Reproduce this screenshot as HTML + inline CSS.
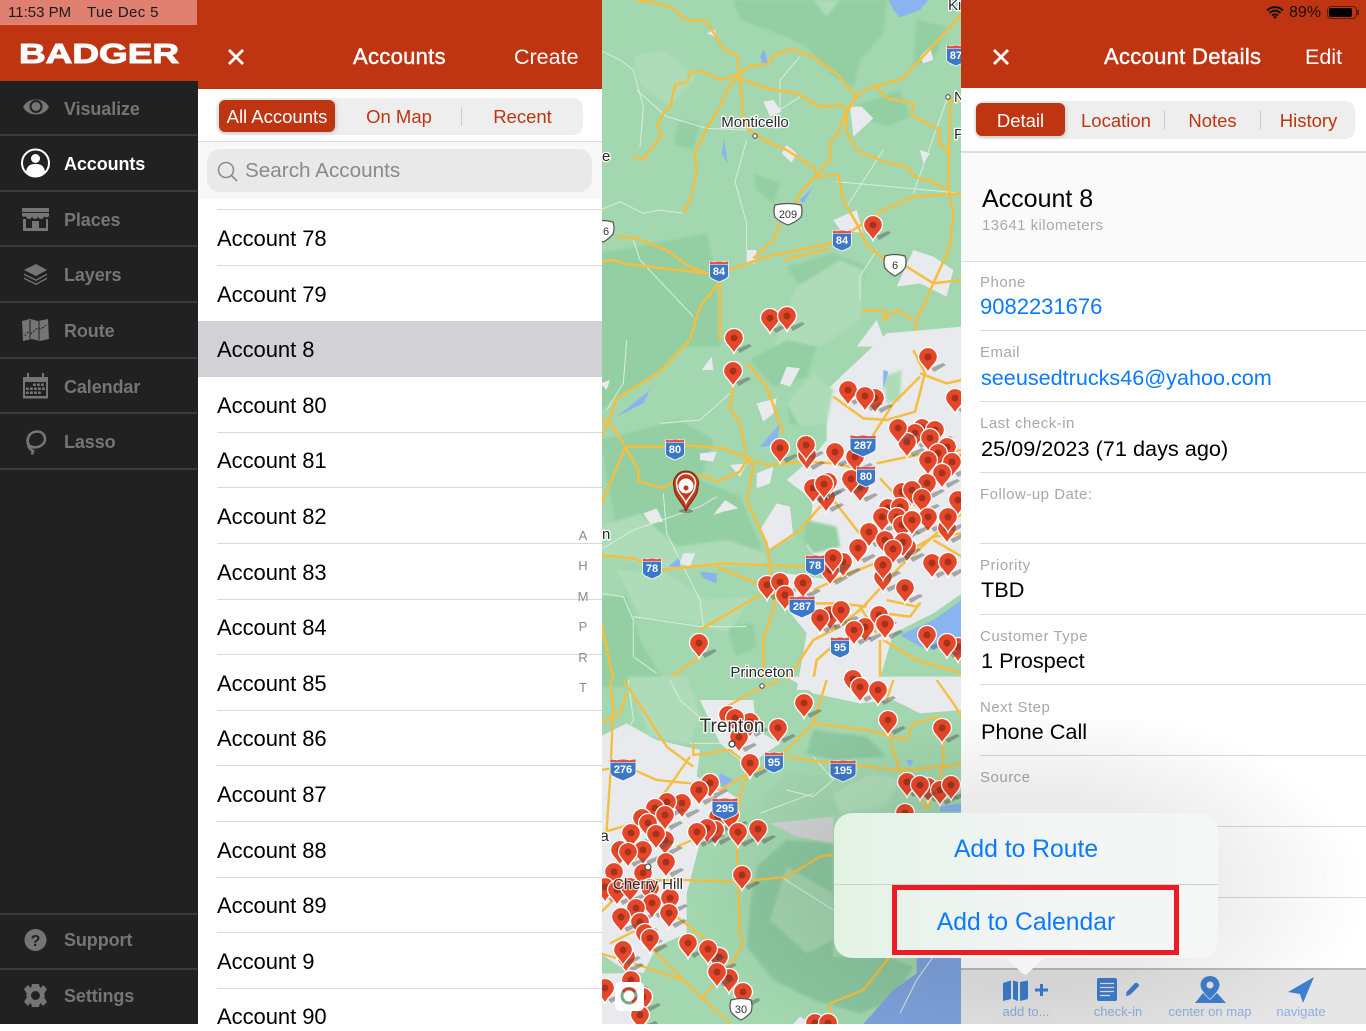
<!DOCTYPE html>
<html><head><meta charset="utf-8"><title>Badger</title>
<style>
html,body{margin:0;padding:0;width:1366px;height:1024px;overflow:hidden;background:#fff;font-family:"Liberation Sans",sans-serif}
.t{position:absolute;white-space:nowrap;line-height:28px;height:28px}
.a{position:absolute}
.h{color:#fff;font-size:21.5px}
.tm{-webkit-text-stroke:.45px #fff;font-size:22px;letter-spacing:.3px}
.nav{color:#757575;font-size:18px;font-weight:700;left:64px;letter-spacing:-.1px}
.l{position:absolute;height:1px;background:#d8d8d8}
.seg{color:#bf3411;font-size:18.5px;text-align:center}
.row{left:217px;font-size:22px;color:#000;letter-spacing:-.05px}
.idx{left:573px;width:20px;text-align:center;font-size:13px;color:#8a8a8a}
.lab{left:980px;font-size:15px;color:#a8a8a8;letter-spacing:.5px}
.val{left:981px;font-size:21.7px;color:#000}
.bl{color:#0a7aff}
.tb{font-size:13px;color:#8ab0df;text-align:center;top:998px}
.pv{font-size:24.7px;color:#0a7aff;text-align:center;left:834px;width:384px}
.mt{font-family:"Liberation Sans",sans-serif;fill:#2a2a2a;stroke:#fff;stroke-width:2.5px;paint-order:stroke}
.sh{font-family:"Liberation Sans",sans-serif;font-size:11px;font-weight:700;text-anchor:middle}
</style></head><body>

<!-- map -->
<svg class="a" style="left:602px;top:0" width="359" height="1024" viewBox="602 0 359 1024">
<defs>
<filter id="b" x="-20%" y="-20%" width="140%" height="140%"><feGaussianBlur stdDeviation="4"/></filter>
<g id="p"><path d="M3 11 L15 6 L18 8 L6 15Z" fill="#555" opacity=".45"/><path d="M0 15.500 C-2 10 -9.500 6 -9.500 0 A9.500 9.500 0 1 1 9.500 0 C9.500 6 2 10 0 15.500Z" fill="#e5472a" stroke="#fff" stroke-width="1.300"/><circle r="3.500" fill="#a5321d"/></g>
<g id="i"><path d="M-9.500 -7 V4 C-9.500 8 -4 9 0 11 C4 9 9.500 8 9.500 4 V-7Z" fill="#3c78c8" stroke="#fff" stroke-width=".8"/><path d="M-9.500 -10 L-5 -9 L0 -10 L5 -9 L9.500 -10 V-6.500 H-9.500Z" fill="#d9534f" stroke="#fff" stroke-width=".6"/></g>
<g id="j"><path d="M-13 -7 V3 C-13 8 -5 9 0 12 C5 9 13 8 13 3 V-7Z" fill="#3c78c8" stroke="#fff" stroke-width=".8"/><path d="M-13 -10 L-6 -9 L0 -10 L6 -9 L13 -10 V-6.500 H-13Z" fill="#d9534f" stroke="#fff" stroke-width=".6"/></g>
<g id="s"><path d="M-10 -9 Q0 -12 10 -9 Q12 -3 10 3 Q6 8 0 11 Q-6 8 -10 3 Q-12 -3 -10 -9Z" fill="#fff" stroke="#555" stroke-width="1.200"/></g>
<g id="w"><path d="M-13 -9 Q0 -12 13 -9 Q15 -3 13 3 Q8 8 0 11 Q-8 8 -13 3 Q-15 -3 -13 -9Z" fill="#fff" stroke="#555" stroke-width="1.200"/></g>
</defs>
<rect x="602" y="0" width="359" height="1024" fill="#a2d7af"/>

<!-- zoom4 area -->
<g transform="translate(600,0) scale(.33333)">
<g fill="#93cfa3" filter="url(#b)">
<path d="M400 0 H860 L850 100 L780 180 L760 260 L700 230 L620 140 L560 110 L420 60Z"/>
<path d="M760 320 L900 270 L930 350 L860 380 L780 350Z"/>
<path d="M0 760 L320 700 L350 830 L360 1040 H0Z"/>
<path d="M460 520 L540 550 L520 610 L470 570Z"/>
<path d="M560 800 L700 760 L800 800 L780 900 L600 860Z"/>
<path d="M950 60 L1040 80 L1000 180 L940 200Z"/>
<path d="M240 360 L300 370 L280 450 L220 430Z"/>
</g>
<g fill="#aedcb9" filter="url(#b)">
<path d="M100 170 L190 150 L290 230 L210 320 L120 250Z"/>
<path d="M590 860 L720 780 L790 810 L780 960 L660 1040 L520 1040Z"/>
<path d="M640 0 L720 0 L680 50Z"/>
</g>
<g fill="#e8eaed">
<path d="M490 305 L520 300 L545 335 L510 350Z"/>
<path d="M750 320 L785 320 L820 355 L760 410Z"/>
<path d="M545 460 L560 435 L590 460 L575 488Z"/>
<path d="M700 660 L770 630 L790 700 L720 690Z"/>
<path d="M940 750 L1000 770 L1060 810 L1040 890 L960 850 L890 860Z"/>
<path d="M320 100 L345 88 L350 112Z"/>
<path d="M960 450 L990 460 L970 490Z"/>
<path d="M440 750 L470 750 L465 790 L440 790Z"/>
<path d="M960 170 L990 140 L1000 180 L970 190Z"/>
<path d="M770 1040 L830 960 L860 1040Z"/>
</g>
<g fill="#8ab4f0">
<path d="M865 0 L985 0 L960 30 L900 52 L880 30Z"/>
<path d="M480 170 L492 148 L505 190 L490 195Z"/>
<path d="M372 415 L383 490 L365 460Z"/>
<path d="M640 170 L720 225 L680 205Z"/>
<path d="M600 600 L640 560 L610 610Z"/>
</g>
<g fill="none" stroke="#d8eedd" stroke-width="3">
<path d="M0 150 L60 180 L100 210 L130 320 L120 440"/>
<path d="M110 270 L200 350 L320 385 L440 390"/>
<path d="M440 420 L405 545 L440 670 L440 750"/>
<path d="M0 630 L60 605 L130 640 L180 630 L250 640"/>
<path d="M710 545 L1086 580"/>
<path d="M850 450 L740 620"/>
<path d="M1040 300 L940 580"/>
<path d="M600 290 L540 330 L540 240 L600 170"/>
<path d="M100 720 L120 780 L280 950"/>
<path d="M830 750 L780 830 L780 900"/>
</g>
<g fill="none" stroke="#f6bd3f" stroke-width="7.500" stroke-linejoin="round">
<path d="M110 0 L170 10 L220 25 L240 45 L270 62 L318 62 L345 105 L372 148 L410 165 L418 225 L430 345 L440 385 L500 425 L560 450 L645 505 L650 530 L715 525 L730 600 L775 680 L800 735 L850 775 L920 800 L1000 850"/>
<path d="M100 470 L130 478 L185 405 L172 375 L190 340 L212 318 L225 255 L262 245 L272 215 L310 215 L362 240 L415 225 L445 200 L510 190 L520 165 L575 148 L640 170 L720 230 L735 255 L760 275 L765 300 L740 330 L715 395 L690 430 L690 480 L645 530 L600 580 L585 615"/>
<path d="M418 225 L380 270 L360 320 L320 385 L285 460 L290 520 L270 600 L250 640"/>
<path d="M418 235 L500 265 L590 280 L660 322 L720 315 L745 330 L770 290 L800 265 L905 238 L950 190 L1060 70 L1086 40"/>
<path d="M830 262 L860 295 L940 310 L935 345 L1020 390"/>
<path d="M740 340 L740 395 L770 450 L850 485 L920 500 L945 530 L1000 545 L1040 570"/>
<path d="M0 785 L40 780 L80 792 L320 820 L360 820 L500 770 L690 730 L760 690 L850 630 L940 590 L1086 580"/>
<path d="M50 710 L100 712 L200 750 L260 795 L320 820"/>
<path d="M540 670 L520 720 L460 775"/>
<path d="M360 840 L360 1020"/>
<path d="M355 850 L300 920 L270 1020"/>
<path d="M1086 300 L1050 300 L1045 560 L1060 640 L1050 740 L1000 850 L950 960 L945 1020"/>
<path d="M1020 390 L1015 420 L1045 460"/>
<path d="M1000 850 L1086 840"/>
<path d="M785 930 L860 935 L850 960 L890 930 L940 960"/>
<path d="M550 780 L690 745"/>
</g>
</g>

<!-- zoom5 area -->
<g transform="translate(600,340) scale(.33333)">
<path d="M680 150 L860 -20 L1086 -40 V760 L1000 820 L880 880 L830 1050 H590 L620 880 L540 780 L560 700 L700 720 L620 620 L640 480 L560 420 L640 350 L680 300Z" fill="#e8eaed"/>
<g fill="#93cfa3" filter="url(#b)">
<path d="M0 -10 L270 -10 L180 95 L50 175 L0 210Z"/>
<path d="M0 300 L240 240 L340 300 L300 420 L420 470 L470 590 L500 670 L190 680 L60 620Z"/>
<path d="M620 540 L710 560 L720 620 L640 640 L610 600Z"/>
<path d="M450 60 L560 0 L650 20 L620 110 L520 140Z"/>
<path d="M560 180 L640 220 L620 260 L570 250Z"/>
<path d="M380 860 L460 850 L470 920 L410 950Z"/>
<path d="M0 770 L80 770 L120 900 L200 1040 H0Z"/>
</g>
<g fill="#aedcb9" filter="url(#b)">
<path d="M0 560 L120 520 L230 620 L380 600 L500 640 L500 670 L190 690 L0 640Z"/>
<path d="M50 690 L200 700 L320 780 L460 770 L380 880 L290 850 L120 830Z"/>
<path d="M850 110 L905 90 L900 180 L860 190Z" />
<path d="M640 100 L700 150 L680 250 L600 260 L560 190Z"/>
</g>
<g fill="#e8eaed">
<path d="M470 190 L530 175 L520 220 L490 245Z"/>
<path d="M560 80 L600 85 L570 140 L540 130Z"/>
<path d="M300 340 L350 335 L340 365 L300 360Z"/>
<path d="M340 525 L375 480 L415 505 L370 515Z"/>
<path d="M130 520 L170 505 L190 545 L150 550Z"/>
<path d="M305 90 L335 50 L340 90Z"/>
<path d="M470 400 L520 380 L510 430 L470 445Z"/>
<path d="M480 570 L530 490 L570 500 L580 590 L510 630Z"/>
<path d="M250 640 L285 640 L270 680 L240 670Z"/>
<path d="M390 375 L440 370 L420 410Z"/>
<path d="M0 130 L30 120 L20 150Z"/>
</g>
<g fill="#8ab4f0">
<path d="M1086 780 L1000 840 L900 885 L960 920 L1000 930 L1086 900Z"/>
<path d="M480 320 L540 250 L530 310 L500 320Z"/>
<path d="M300 695 L350 700 L350 730 L310 715Z"/>
<path d="M205 680 L240 650 L240 680Z"/>
<path d="M50 230 L150 150 L130 190Z"/>
<path d="M850 90 L865 95 L850 150Z"/>
</g>
<g fill="none" stroke="#d8eedd" stroke-width="3">
<path d="M0 630 L100 570 L300 500 L350 470"/>
<path d="M190 460 L200 580 L300 780 L310 860"/>
<path d="M100 830 L300 860 L440 860"/>
<path d="M80 0 L70 130 L20 210"/>
<path d="M180 250 L300 240 L390 160"/>
<path d="M0 760 L70 770 L100 840 L100 950 L170 1000"/>
</g>
<g fill="none" stroke="#f6bd3f" stroke-width="7.500" stroke-linejoin="round">
<path d="M270 0 L180 95 L50 175 L30 230 L0 300"/>
<path d="M5 235 L40 260 L75 320 L115 390 L115 425 L190 445 L250 405 L320 410 L350 425 L420 395 L440 360"/>
<path d="M75 320 L190 320 L250 315 L370 325 L440 355 L500 375 L620 365 L700 370 L770 385"/>
<path d="M75 325 L30 430 L0 500"/>
<path d="M400 140 L390 205 L420 250 L440 355 L460 380 L440 480 L500 610 L510 680 L525 790 L490 900 L490 1020"/>
<path d="M440 70 L500 140 L550 280"/>
<path d="M510 630 L600 570 L660 500 L700 480 L770 570 L800 600"/>
<path d="M0 645 L100 655 L180 690 L370 670 L610 680 L700 680"/>
<path d="M350 680 L470 730"/>
<path d="M300 870 L470 770 L520 750"/>
<path d="M300 950 L200 1020"/>
<path d="M640 750 L750 700 L850 660 L950 620 L1000 590 L1086 580"/>
<path d="M600 790 L720 790 L800 800"/>
<path d="M560 1020 L640 900 L720 860 L790 800 L900 680 L1010 580 L1086 520"/>
<path d="M700 170 L790 235 L860 240 L945 215 L975 100 L940 30"/>
<path d="M810 300 L880 190 L960 110"/>
<path d="M830 370 L950 345 L1086 330"/>
<path d="M840 415 L900 480 L960 500"/>
<path d="M840 900 L840 1020"/>
<path d="M850 900 L950 960 L1086 1000"/>
<path d="M780 800 L830 880"/>
<path d="M860 780 L950 800 L960 790 L930 830 L850 820"/>
<path d="M0 830 L40 1020"/>
<path d="M640 1020 L650 960 L720 900"/>
<path d="M960 100 L1040 130 L1086 120"/>
<path d="M1000 600 L1086 650"/>
</g>
</g>

<!-- zoom6 area -->
<g transform="translate(600,680) scale(.33333)">
<g fill="#e8eaed">
<path d="M0 170 L80 130 L170 180 L300 210 L290 290 L360 320 L420 360 L310 450 L260 640 L260 760 L170 800 L130 880 L60 860 L0 820Z"/>
<path d="M300 60 L460 60 L470 150 L540 190 L440 260 L360 190Z"/>
<path d="M560 -10 H1086 V90 L960 100 L880 60 L780 70 L640 40Z"/>
<path d="M510 430 L700 410 L700 490 L590 470Z" fill="#cfd1d3"/>
<path d="M0 880 L100 880 L140 1032 H0Z"/>
<path d="M600 1010 L640 1032 H580Z"/>
</g>
<g fill="#8bc7a0" filter="url(#b)">
<path d="M470 560 L560 480 L700 490 L700 830 L860 830 L940 860 L880 960 L780 1000 L640 960 L520 900 L440 800 L450 680Z"/>
<path d="M640 150 L800 170 L860 230 L700 240 L620 220Z"/>
</g>
<g fill="#a2d3ae" filter="url(#b)">
<path d="M560 560 L700 640 L700 780 L620 820 L510 720Z"/>
<path d="M560 280 L680 290 L720 400 L510 420 L490 350Z"/>
</g>
<g fill="#aedcb9" filter="url(#b)">
<path d="M80 -10 L260 -10 L300 100 L270 190 L150 170Z"/>
<path d="M820 280 L900 300 L860 380 L720 400 L700 340Z"/>
</g>
<path d="M790 1032 L880 930 L950 880 L950 830 H1086 V1032Z" fill="#7fa3dd"/>
<path d="M360 280 L400 300 L370 320 L355 300Z" fill="#8ab4f0"/>
<path d="M920 240 L940 240 L930 260Z" fill="#8ab4f0"/>
<path d="M1020 380 L1086 370 L1086 395 L1020 395Z" fill="#8ab4f0"/>
<g fill="none" stroke="#d8eedd" stroke-width="3">
<path d="M560 330 L640 350 L700 300 L640 230"/>
<path d="M480 400 L640 340"/>
<path d="M550 595 L700 690"/>
<path d="M270 190 L400 190"/>
<path d="M85 0 L100 120 L60 180"/>
<path d="M210 0 L240 60 L320 130"/>
<path d="M1000 830 L950 900 L900 1000"/>
</g>
<g fill="none" stroke="#f6bd3f" stroke-width="7" stroke-linejoin="round">
<path d="M30 0 L40 80 L30 300 L20 450"/>
<path d="M70 0 L130 90 L200 200 L280 260"/>
<path d="M0 270 L80 260 L170 300 L270 310 L360 330 L430 290 L520 250 L640 130 L680 0"/>
<path d="M270 230 L200 330 L100 430 L0 460"/>
<path d="M280 190 L280 225 L390 210 L450 260 L420 340 L410 500 L420 770 L430 790 L390 860 L300 960"/>
<path d="M560 230 L700 250 L900 270 L1030 260 L1086 250"/>
<path d="M640 130 L800 150 L920 180 L940 130 L1020 110"/>
<path d="M860 150 L900 270 L980 380"/>
<path d="M1030 180 L1030 260 L980 390"/>
<path d="M230 500 L300 470 L400 410"/>
<path d="M0 600 L250 600 L420 605 L560 590 L660 530 L700 525"/>
<path d="M150 800 L250 900 L390 1030"/>
<path d="M230 710 L320 780"/>
<path d="M0 820 L100 850 L250 900"/>
<path d="M690 1020 L690 970 L790 930 L870 830"/>
<path d="M130 740 L30 790"/>
<path d="M0 700 L60 640"/>
<path d="M380 80 L470 30 L540 0"/>
<path d="M860 60 L880 0"/>
<path d="M1010 0 L1060 70 L1086 110"/>
<path d="M0 130 L60 100 L80 40"/>
</g>
</g>

<!-- labels -->
<text class="mt" x="755" y="127" font-size="15" text-anchor="middle">Monticello</text>
<text class="mt" x="762" y="677" font-size="15" text-anchor="middle">Princeton</text>
<text class="mt" x="948" y="10" font-size="15">Ki</text>
<text class="mt" x="602" y="161" font-size="15">e</text>
<text class="mt" x="954" y="102" font-size="15">N</text>
<text class="mt" x="954" y="139" font-size="15">P</text>
<text class="mt" x="602" y="539" font-size="15">n</text>
<text class="mt" x="600" y="841" font-size="16">a</text>
<circle cx="755" cy="136" r="2.200" fill="#fff" stroke="#444"/>
<circle cx="948" cy="97" r="2.200" fill="#fff" stroke="#444"/>
<circle cx="762" cy="686" r="2.200" fill="#fff" stroke="#444"/>

<!-- shields -->
<use href="#i" x="719" y="271"/><text class="sh" x="719" y="275" fill="#fff">84</text>
<use href="#i" x="842" y="240"/><text class="sh" x="842" y="244" fill="#fff">84</text>
<use href="#i" x="675" y="449"/><text class="sh" x="675" y="453" fill="#fff">80</text>
<use href="#i" x="652" y="568"/><text class="sh" x="652" y="572" fill="#fff">78</text>
<use href="#w" x="788" y="214"/><text class="sh" x="788" y="218" fill="#333" style="font-weight:400">209</text>
<use href="#s" x="895" y="265"/><text class="sh" x="895" y="269" fill="#333" style="font-weight:400">6</text>
<use href="#s" x="603" y="231"/><text class="sh" x="606" y="235" fill="#333" style="font-weight:400">6</text>
<use href="#i" x="956" y="55"/><text class="sh" x="956" y="59" fill="#fff">87</text>

<!-- pins -->
<g id="pins">
<use href="#p" x="873" y="225"/><use href="#p" x="770" y="318"/><use href="#p" x="787" y="316"/><use href="#p" x="734" y="338"/><use href="#p" x="733" y="371"/><use href="#p" x="928" y="357"/><use href="#p" x="875" y="398"/><use href="#p" x="848" y="390"/><use href="#p" x="865" y="396"/><use href="#p" x="955" y="398"/>
<use href="#p" x="922" y="428"/><use href="#p" x="935" y="430"/><use href="#p" x="915" y="433"/><use href="#p" x="907" y="442"/><use href="#p" x="898" y="428"/><use href="#p" x="930" y="438"/><use href="#p" x="947" y="447"/><use href="#p" x="938" y="453"/><use href="#p" x="928" y="460"/><use href="#p" x="952" y="462"/><use href="#p" x="942" y="473"/>
<use href="#p" x="780" y="448"/><use href="#p" x="807" y="455"/><use href="#p" x="806" y="445"/><use href="#p" x="835" y="452"/><use href="#p" x="855" y="457"/><use href="#p" x="860" y="487"/><use href="#p" x="851" y="479"/><use href="#p" x="826" y="497"/><use href="#p" x="828" y="482"/><use href="#p" x="813" y="488"/><use href="#p" x="824" y="484"/>
<use href="#p" x="927" y="483"/><use href="#p" x="902" y="492"/><use href="#p" x="912" y="490"/><use href="#p" x="922" y="498"/><use href="#p" x="958" y="500"/><use href="#p" x="888" y="508"/><use href="#p" x="900" y="507"/><use href="#p" x="882" y="517"/><use href="#p" x="897" y="517"/><use href="#p" x="928" y="517"/><use href="#p" x="947" y="528"/><use href="#p" x="948" y="517"/><use href="#p" x="902" y="525"/><use href="#p" x="912" y="520"/>
<use href="#p" x="869" y="532"/><use href="#p" x="858" y="548"/><use href="#p" x="885" y="540"/><use href="#p" x="907" y="547"/><use href="#p" x="903" y="542"/><use href="#p" x="893" y="549"/><use href="#p" x="843" y="562"/><use href="#p" x="830" y="570"/><use href="#p" x="833" y="558"/><use href="#p" x="883" y="577"/><use href="#p" x="883" y="565"/><use href="#p" x="932" y="563"/><use href="#p" x="948" y="562"/><use href="#p" x="905" y="588"/>
<use href="#p" x="767" y="585"/><use href="#p" x="780" y="582"/><use href="#p" x="803" y="583"/><use href="#p" x="785" y="595"/><use href="#p" x="830" y="615"/><use href="#p" x="820" y="618"/><use href="#p" x="841" y="610"/><use href="#p" x="865" y="627"/><use href="#p" x="854" y="630"/><use href="#p" x="879" y="615"/><use href="#p" x="885" y="624"/><use href="#p" x="958" y="647"/><use href="#p" x="927" y="635"/><use href="#p" x="947" y="643"/><use href="#p" x="699" y="643"/>
<use href="#p" x="853" y="679"/><use href="#p" x="860" y="687"/><use href="#p" x="878" y="690"/><use href="#p" x="804" y="703"/><use href="#p" x="888" y="720"/><use href="#p" x="942" y="728"/><use href="#p" x="728" y="715"/><use href="#p" x="750" y="722"/><use href="#p" x="735" y="718"/><use href="#p" x="739" y="737"/><use href="#p" x="778" y="728"/><use href="#p" x="750" y="763"/>
<use href="#p" x="907" y="782"/><use href="#p" x="928" y="787"/><use href="#p" x="940" y="790"/><use href="#p" x="951" y="785"/><use href="#p" x="920" y="785"/><use href="#p" x="905" y="813"/>
<use href="#p" x="710" y="783"/><use href="#p" x="699" y="790"/><use href="#p" x="718" y="817"/><use href="#p" x="730" y="815"/><use href="#p" x="682" y="803"/><use href="#p" x="667" y="802"/><use href="#p" x="655" y="808"/><use href="#p" x="642" y="818"/><use href="#p" x="648" y="823"/><use href="#p" x="665" y="815"/><use href="#p" x="665" y="840"/><use href="#p" x="656" y="834"/><use href="#p" x="715" y="830"/><use href="#p" x="707" y="828"/><use href="#p" x="697" y="832"/><use href="#p" x="738" y="832"/><use href="#p" x="758" y="829"/>
<use href="#p" x="631" y="833"/><use href="#p" x="643" y="850"/><use href="#p" x="620" y="850"/><use href="#p" x="628" y="852"/><use href="#p" x="666" y="862"/><use href="#p" x="742" y="875"/><use href="#p" x="643" y="873"/><use href="#p" x="614" y="872"/><use href="#p" x="605" y="887"/><use href="#p" x="617" y="890"/><use href="#p" x="630" y="887"/><use href="#p" x="650" y="888"/><use href="#p" x="652" y="903"/><use href="#p" x="670" y="898"/><use href="#p" x="669" y="913"/><use href="#p" x="636" y="908"/><use href="#p" x="640" y="922"/><use href="#p" x="621" y="917"/><use href="#p" x="645" y="933"/><use href="#p" x="650" y="938"/>
<use href="#p" x="626" y="957"/><use href="#p" x="623" y="950"/><use href="#p" x="688" y="943"/><use href="#p" x="719" y="957"/><use href="#p" x="708" y="949"/><use href="#p" x="729" y="978"/><use href="#p" x="717" y="972"/><use href="#p" x="743" y="992"/><use href="#p" x="631" y="980"/><use href="#p" x="605" y="988"/><use href="#p" x="643" y="997"/><use href="#p" x="640" y="1015"/><use href="#p" x="815" y="1023"/><use href="#p" x="828" y="1023"/>
</g>

<!-- shields on top -->
<use href="#j" x="863" y="445"/><text class="sh" x="863" y="449" fill="#fff">287</text>
<use href="#i" x="866" y="476"/><text class="sh" x="866" y="480" fill="#fff">80</text>
<use href="#i" x="815" y="565"/><text class="sh" x="815" y="569" fill="#fff">78</text>
<use href="#j" x="802" y="606"/><text class="sh" x="802" y="610" fill="#fff">287</text>
<use href="#i" x="840" y="647"/><text class="sh" x="840" y="651" fill="#fff">95</text>
<use href="#i" x="774" y="762"/><text class="sh" x="774" y="766" fill="#fff">95</text>
<use href="#j" x="623" y="769"/><text class="sh" x="623" y="773" fill="#fff">276</text>
<use href="#j" x="843" y="770"/><text class="sh" x="843" y="774" fill="#fff">195</text>
<use href="#j" x="725" y="808"/><text class="sh" x="725" y="812" fill="#fff">295</text>
<use href="#s" x="741" y="1009"/><text class="sh" x="741" y="1013" fill="#333" style="font-weight:400">30</text>

<text class="mt" x="732" y="732" font-size="19" text-anchor="middle">Trenton</text>
<circle cx="732" cy="744" r="3" fill="#fff" stroke="#333" stroke-width="1.200"/>
<circle cx="648" cy="867" r="3" fill="#fff" stroke="#333" stroke-width="1"/>
<text class="mt" x="648" y="889" font-size="15" text-anchor="middle" style="stroke:rgba(255,255,255,.7)">Cherry Hill</text>

<!-- selected pin -->
<ellipse cx="686" cy="511" rx="7" ry="2" fill="#666" opacity=".6"/>
<path d="M686 511 C683 503 674 497 674 487 A12.500 12.500 0 1 1 698 487 C698 497 689 503 686 511Z" fill="#c03a1b" stroke="#7d2310" stroke-width="1"/>
<path d="M686 503 C684 497 677 493 677 486 A9.500 9.500 0 1 1 695 486 C695 493 688 497 686 503Z" fill="#c03a1b" stroke="#fff" stroke-width="1.500"/>
<circle cx="686" cy="486" r="7.500" fill="#fff"/><circle cx="686" cy="488" r="2.500" fill="#c03a1b"/>

<!-- compass -->
<rect x="615" y="982" width="29" height="29" rx="5" fill="#fff"/>
<circle cx="629" cy="996" r="7" fill="none" stroke="#7aa98a" stroke-width="3"/>
<path d="M623 992 A7 7 0 0 1 635 992 M636 997 A7 7 0 0 1 632 1002" fill="none" stroke="#c0452a" stroke-width="3"/>
</svg>

<!-- sidebar -->
<div class="a" style="left:0;top:0;width:198px;height:1024px;background:#212121"></div>
<div class="a" style="left:0;top:0;width:198px;height:81px;background:#bf3411"></div>
<div class="a" style="left:0;top:0;width:197px;height:25px;background:#e08070"></div>
<div class="t" style="left:8px;top:-1px;font-size:15px;color:#1a1a1a">11:53 PM</div>
<div class="t" style="left:87px;top:-1px;font-size:15px;color:#1a1a1a;letter-spacing:.35px">Tue Dec 5</div>
<svg class="a" style="left:0;top:30px" width="198" height="44"><text x="19" y="33" font-family="Liberation Sans" font-weight="700" font-size="28" fill="#fff" stroke="#fff" stroke-width="1" textLength="160" lengthAdjust="spacingAndGlyphs">BADGER</text></svg>

<div class="l" style="left:0;width:197px;top:134px;height:2px;background:#3a3a3a"></div>
<div class="l" style="left:0;width:197px;top:190px;height:2px;background:#3a3a3a"></div>
<div class="l" style="left:0;width:197px;top:245px;height:2px;background:#3a3a3a"></div>
<div class="l" style="left:0;width:197px;top:301px;height:2px;background:#3a3a3a"></div>
<div class="l" style="left:0;width:197px;top:357px;height:2px;background:#3a3a3a"></div>
<div class="l" style="left:0;width:197px;top:412px;height:2px;background:#3a3a3a"></div>
<div class="l" style="left:0;width:197px;top:468px;height:2px;background:#3a3a3a"></div>
<div class="l" style="left:0;width:197px;top:913px;height:2px;background:#3a3a3a"></div>
<div class="l" style="left:0;width:197px;top:968px;height:2px;background:#3a3a3a"></div>

<div class="t nav" style="top:95px">Visualize</div>
<div class="t nav" style="top:150px;color:#fff">Accounts</div>
<div class="t nav" style="top:206px">Places</div>
<div class="t nav" style="top:261px">Layers</div>
<div class="t nav" style="top:317px">Route</div>
<div class="t nav" style="top:373px">Calendar</div>
<div class="t nav" style="top:428px">Lasso</div>
<div class="t nav" style="top:926px">Support</div>
<div class="t nav" style="top:982px">Settings</div>

<svg class="a" style="left:0;top:0" width="198" height="1024">
<g fill="#757575">
<path d="M23 107 C28 97 44 97 49 107 C44 117 28 117 23 107Z"/><circle cx="36" cy="106.500" r="6.500" fill="#212121"/><circle cx="36" cy="106.500" r="4.500"/>
<path d="M22 208 H49 V212 H22Z"/><path d="M22 213 H49 L49 216 A3 3 0 0 1 44 216 A3 3 0 0 1 38 216 A3 3 0 0 1 32 216 A3 3 0 0 1 26 216 A3 3 0 0 1 22 216Z"/>
<path d="M23 219 H26 V228 H32 V221 H39 V228 H46 V219 H48 V231 H23Z"/>
<path d="M36 264 L47 270 L36 276 L24 270Z"/><path d="M24 273.500 L36 279.500 L47 273.500 L47 275 L36 281 L24 275Z"/><path d="M24 277.500 L36 283.500 L47 277.500 L47 279 L36 285 L24 279Z"/>
<path d="M22 321 L30 319 L38 321 L48 319 L49 339 L40 341 L32 339 L23 341Z"/>
<path d="M23 377 V398.500 H48 V377 H44 V373 H42 V377 H29 V373 H27 V377Z"/>
<circle cx="35.500" cy="940" r="11"/>
<path d="M31 987 L40 987 L45 995.500 L40 1004 L31 1004 L26 995.500Z"/>
<path d="M32 984 H39 L40 988 H31Z M32 1007 H39 L40 1003 H31Z M24 989 L28 985 L32 990 L27 994Z M47 989 L43 985 L39 990 L44 994Z M24 1002 L28 1006 L32 1001 L27 997Z M47 1002 L43 1006 L39 1001 L44 997Z"/>
</g>
<circle cx="35.500" cy="995.500" r="4.500" fill="#212121"/>
<g fill="none" stroke="#212121" stroke-width="1"><path d="M30 320 V339 M39 321 V340"/><path d="M25 336 C28 328 31 337 34 331 C37 326 40 332 46 325" stroke-dasharray="2 1.500"/></g>
<g fill="#212121"><rect x="25" y="382" width="21" height="14"/></g>
<g fill="#757575"><rect x="33" y="383.500" width="2.800" height="2.500"/><rect x="37" y="383.500" width="2.800" height="2.500"/><rect x="41" y="383.500" width="2.800" height="2.500"/><rect x="26" y="387.500" width="2.800" height="2.500"/><rect x="30" y="387.500" width="2.800" height="2.500"/><rect x="34" y="387.500" width="2.800" height="2.500"/><rect x="38" y="387.500" width="2.800" height="2.500"/><rect x="42" y="387.500" width="2.800" height="2.500"/><rect x="26" y="391.500" width="2.800" height="2.500"/><rect x="30" y="391.500" width="2.800" height="2.500"/><rect x="34" y="391.500" width="2.800" height="2.500"/><rect x="38" y="391.500" width="2.800" height="2.500"/></g>
<path d="M30 447 C25.500 443 27 432 37 431.500 C45 431.500 47 440 43 444 C39 448 33 448 30 446 M29 443 C27 447 31 450 33 451 L32 454.500" fill="none" stroke="#757575" stroke-width="2.600"/>
<circle cx="35.500" cy="163" r="13.500" fill="none" stroke="#fff" stroke-width="2"/>
<circle cx="35.500" cy="158.500" r="4.500" fill="#fff"/><path d="M26 172 C27 165 31 164 35.500 164 C40 164 44 165 45 172 A13 13 0 0 1 26 172Z" fill="#fff"/>
<text x="35.500" y="946" text-anchor="middle" font-family="Liberation Sans" font-weight="700" font-size="16" fill="#212121">?</text>
</svg>

<!-- accounts column -->
<div class="a" style="left:198px;top:0;width:404px;height:1024px;background:#fff"></div>
<div class="a" style="left:198px;top:0;width:404px;height:89px;background:#bf3411"></div>
<svg class="a" style="left:226px;top:47px" width="20" height="20"><path d="M3 3 L17 17 M17 3 L3 17" stroke="#fff" stroke-width="2.800"/></svg>
<div class="t h tm" style="left:353px;top:43px">Accounts</div>
<div class="t h" style="left:514px;top:43px">Create</div>
<div class="a" style="left:216px;top:98px;width:367px;height:37px;background:#eee;border-radius:10px"></div>
<div class="a" style="left:219px;top:100px;width:116px;height:32px;background:#bf3411;border-radius:6px;box-shadow:1px 1px 4px rgba(0,0,0,.18)"></div>
<div class="a" style="left:461px;top:107px;width:1px;height:19px;background:#ccc"></div>
<div class="t seg" style="left:219px;width:116px;top:103px;color:#fff">All Accounts</div>
<div class="t seg" style="left:335px;width:128px;top:103px">On Map</div>
<div class="t seg" style="left:462px;width:121px;top:103px">Recent</div>
<div class="a" style="left:198px;top:141px;width:404px;height:57px;background:#f8f8f8;border-top:1px solid #ddd"></div>
<div class="a" style="left:207px;top:149px;width:385px;height:43px;background:#e9e9e9;border-radius:13px"></div>
<svg class="a" style="left:216px;top:160px" width="24" height="24"><circle cx="10" cy="10" r="7.500" fill="none" stroke="#8e8e8e" stroke-width="1.600"/><path d="M15.500 15.500 L21 21" stroke="#8e8e8e" stroke-width="1.800"/></svg>
<div class="t" style="left:245px;top:157px;font-size:20.700px;color:#8a8a8a">Search Accounts</div>

<div class="a" style="left:198px;top:321px;width:404px;height:56px;background:#d1d1d6"></div>
<div class="l" style="left:217px;width:385px;top:209px"></div>
<div class="l" style="left:217px;width:385px;top:265px"></div>
<div class="l" style="left:217px;width:385px;top:432px"></div>
<div class="l" style="left:217px;width:385px;top:487px"></div>
<div class="l" style="left:217px;width:385px;top:543px"></div>
<div class="l" style="left:217px;width:385px;top:599px"></div>
<div class="l" style="left:217px;width:385px;top:654px"></div>
<div class="l" style="left:217px;width:385px;top:710px"></div>
<div class="l" style="left:217px;width:385px;top:765px"></div>
<div class="l" style="left:217px;width:385px;top:821px"></div>
<div class="l" style="left:217px;width:385px;top:877px"></div>
<div class="l" style="left:217px;width:385px;top:932px"></div>
<div class="l" style="left:217px;width:385px;top:988px"></div>

<div class="t row" style="top:225px">Account 78</div>
<div class="t row" style="top:281px">Account 79</div>
<div class="t row" style="top:336px">Account 8</div>
<div class="t row" style="top:392px">Account 80</div>
<div class="t row" style="top:447px">Account 81</div>
<div class="t row" style="top:503px">Account 82</div>
<div class="t row" style="top:559px">Account 83</div>
<div class="t row" style="top:614px">Account 84</div>
<div class="t row" style="top:670px">Account 85</div>
<div class="t row" style="top:725px">Account 86</div>
<div class="t row" style="top:781px">Account 87</div>
<div class="t row" style="top:837px">Account 88</div>
<div class="t row" style="top:892px">Account 89</div>
<div class="t row" style="top:948px">Account 9</div>
<div class="t row" style="top:1003px">Account 90</div>

<div class="t idx" style="top:522px">A</div>
<div class="t idx" style="top:552px">H</div>
<div class="t idx" style="top:583px">M</div>
<div class="t idx" style="top:613px">P</div>
<div class="t idx" style="top:644px">R</div>
<div class="t idx" style="top:674px">T</div>

<!-- details column -->
<div class="a" style="left:961px;top:0;width:405px;height:1024px;background:#fff"></div>
<div class="a" style="left:961px;top:0;width:405px;height:88px;background:#bf3411"></div>
<svg class="a" style="left:1266px;top:6px" width="18" height="13" viewBox="0 0 18 13"><path d="M1 4.500 C5.500 0 12.500 0 17 4.500 M3.500 7 C6.500 4 11.500 4 14.500 7 M6 9.500 C7.500 8 10.500 8 12 9.500" fill="none" stroke="#111" stroke-width="2"/><path d="M9 13 L7 10.800 C8 10 10 10 11 10.800Z" fill="#111"/></svg>
<div class="t" style="left:1289px;top:-1px;font-size:16px;color:#1c0d08">89%</div>
<div class="a" style="left:1327px;top:6px;width:28px;height:11px;border:1px solid #5e1c0a;border-radius:4px"></div>
<div class="a" style="left:1329px;top:8px;width:23px;height:9px;background:#000;border-radius:2px"></div>
<div class="a" style="left:1357px;top:10px;width:2px;height:5px;background:#5e1c0a"></div>
<svg class="a" style="left:991px;top:47px" width="20" height="20"><path d="M3 3 L17 17 M17 3 L3 17" stroke="#fff" stroke-width="2.800"/></svg>
<div class="t h tm" style="left:1104px;top:43px">Account Details</div>
<div class="t h" style="left:1305px;top:43px">Edit</div>
<div class="a" style="left:974px;top:101px;width:381px;height:38px;background:#eee;border-radius:10px"></div>
<div class="a" style="left:976px;top:103px;width:89px;height:33px;background:#bf3411;border-radius:6px;box-shadow:1px 1px 4px rgba(0,0,0,.18)"></div>
<div class="a" style="left:1164px;top:110px;width:1px;height:20px;background:#ccc"></div>
<div class="a" style="left:1260px;top:110px;width:1px;height:20px;background:#ccc"></div>
<div class="t seg" style="left:976px;width:89px;top:107px;color:#fff">Detail</div>
<div class="t seg" style="left:1068px;width:96px;top:107px">Location</div>
<div class="t seg" style="left:1165px;width:95px;top:107px">Notes</div>
<div class="t seg" style="left:1261px;width:95px;top:107px">History</div>
<div class="a" style="left:961px;top:151px;width:405px;height:111px;box-sizing:border-box;background:#fafafa;border-top:2px solid #ddd;border-bottom:1px solid #ddd"></div>
<div class="t" style="left:982px;top:185px;font-size:25px;color:#000">Account 8</div>
<div class="t" style="left:982px;top:212px;font-size:15px;color:#aaa;letter-spacing:.45px">13641 kilometers</div>

<div class="t lab" style="top:269px">Phone</div>
<div class="t val bl" style="top:293px;font-size:22px;left:980px">9082231676</div>
<div class="l" style="left:980px;width:386px;top:330px"></div>
<div class="t lab" style="top:339px">Email</div>
<div class="t val bl" style="top:364px;font-size:21.600px">seeusedtrucks46@yahoo.com</div>
<div class="l" style="left:980px;width:386px;top:401px"></div>
<div class="t lab" style="top:410px">Last check-in</div>
<div class="t val" style="top:435px">25/09/2023 (71 days ago)</div>
<div class="l" style="left:980px;width:386px;top:472px"></div>
<div class="t lab" style="top:481px">Follow-up Date:</div>
<div class="l" style="left:980px;width:386px;top:543px"></div>
<div class="t lab" style="top:552px">Priority</div>
<div class="t val" style="top:576px">TBD</div>
<div class="l" style="left:980px;width:386px;top:614px"></div>
<div class="t lab" style="top:623px">Customer Type</div>
<div class="t val" style="top:647px">1 Prospect</div>
<div class="l" style="left:980px;width:386px;top:684px"></div>
<div class="t lab" style="top:694px">Next Step</div>
<div class="t val" style="top:718px">Phone Call</div>
<div class="l" style="left:980px;width:386px;top:755px"></div>
<div class="t lab" style="top:764px">Source</div>
<div class="l" style="left:980px;width:386px;top:826px"></div>
<div class="l" style="left:980px;width:386px;top:897px"></div>

<!-- toolbar -->
<div class="a" style="left:961px;top:968px;width:405px;height:56px;background:#e6e6e6;border-top:2px solid #bdbdbd;box-sizing:border-box"></div>
<svg class="a" style="left:961px;top:968px" width="405" height="56" viewBox="961 968 405 56">
<g fill="#3d7fd0">
<path d="M1003 983 L1011 980.500 V999 L1003 1001Z"/><path d="M1013 980.500 L1018 982 V1001 L1013 999Z" /><path d="M1020 982 L1028 980.500 V999 L1020 1001Z"/>
<path d="M1040 984 H1043 V988.500 H1048 V991.500 H1043 V996 H1040 V991.500 H1035 V988.500 H1040Z"/>
<rect x="1097" y="978" width="20" height="23" rx="2"/>
<path d="M1126 996 L1126.500 992 L1135 983 C1137 982 1139 984 1139 986 L1130 995Z"/>
<path d="M1210 976 C1204 976 1200.500 980.500 1200.500 985 C1200.500 990 1207 996 1210 999 C1213 996 1219.500 990 1219.500 985 C1219.500 980.500 1216 976 1210 976Z"/>
<path d="M1195 1003 L1203 993 L1210 1000 L1217 993 L1226 1003 C1216 1003 1205 1003 1195 1003Z"/>
<path d="M1314 977 L1288 992 L1300 994 L1303 1003Z"/>
</g>
<circle cx="1210" cy="985" r="3.500" fill="#e6e6e6"/>
<path d="M1100 983.500 H1114 M1100 987.500 H1114 M1100 991.500 H1114 M1100 995.500 H1110" stroke="#e6e6e6" stroke-width="1.300"/>
</svg>
<div class="t tb" style="left:996px;width:60px">add to...</div>
<div class="t tb" style="left:1083px;width:70px">check-in</div>
<div class="t tb" style="left:1160px;width:100px">center on map</div>
<div class="t tb" style="left:1271px;width:60px">navigate</div>

<!-- dim glow around popover -->
<div class="a" style="left:602px;top:720px;width:764px;height:304px;background:radial-gradient(ellipse 340px 190px at 424px 170px,rgba(0,0,0,.08) 50%,rgba(0,0,0,0) 100%)"></div>

<!-- popover -->
<svg class="a" style="left:1005px;top:955px" width="40" height="22"><path d="M0 2 H40 L23 18 Q20 21 17 18Z" fill="#f4f5f4"/></svg>
<div class="a" style="left:834px;top:813px;width:384px;height:145px;border-radius:18px;background:linear-gradient(90deg,#e2f3e3 0,#eaf3ee 25%,#f3f5f5 55%,#f5f6f6 100%)"></div>
<div class="a" style="left:834px;top:884px;width:384px;height:1px;background:#cdd0cd"></div>
<div class="t pv" style="top:836px">Add to Route</div>
<div class="t pv" style="top:909px">Add to Calendar</div>
<div class="a" style="left:892px;top:885px;width:287px;height:70px;box-sizing:border-box;border:5px solid #ed1c24"></div>
</body></html>
